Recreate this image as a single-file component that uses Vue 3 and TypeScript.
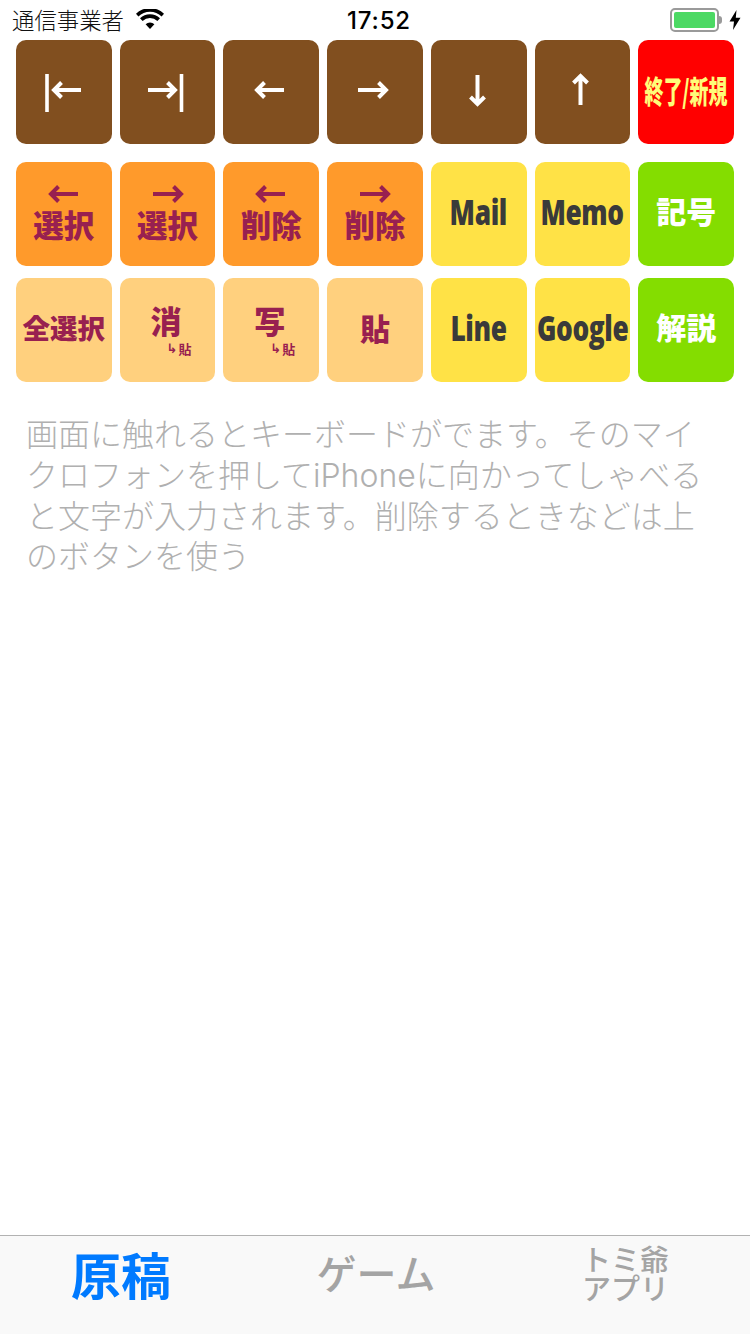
<script setup lang="ts">
type Arrow = 'left' | 'right' | 'up' | 'down' | 'barLeft' | 'barRight'
interface Key {
  tone: string
  text?: string
  arrow?: Arrow
  sub?: boolean
  large?: boolean
}
const rowOne: Key[] = [
  { tone: 'brown', arrow: 'barLeft' },
  { tone: 'brown', arrow: 'barRight' },
  { tone: 'brown', arrow: 'left' },
  { tone: 'brown', arrow: 'right' },
  { tone: 'brown', arrow: 'down' },
  { tone: 'brown', arrow: 'up' },
  { tone: 'red', text: '終了/新規' },
]
const rowTwo: Key[] = [
  { tone: 'orange', arrow: 'left', text: '選択' },
  { tone: 'orange', arrow: 'right', text: '選択' },
  { tone: 'orange', arrow: 'left', text: '削除' },
  { tone: 'orange', arrow: 'right', text: '削除' },
  { tone: 'yellow', text: 'Mail' },
  { tone: 'yellow', text: 'Memo' },
  { tone: 'green', text: '記号' },
]
const rowThree: Key[] = [
  { tone: 'peach', text: '全選択' },
  { tone: 'peach', text: '消', sub: true },
  { tone: 'peach', text: '写', sub: true },
  { tone: 'peach', text: '貼', large: true },
  { tone: 'yellow', text: 'Line' },
  { tone: 'yellow', text: 'Google' },
  { tone: 'green', text: '解説' },
]
const rows = [rowOne, rowTwo, rowThree]
const hint = [
  '画面に触れるとキーボードがでます。そのマイ',
  'クロフォンを押してiPhoneに向かってしゃべる',
  'と文字が入力されます。削除するときなどは上',
  'のボタンを使う',
]
</script>

<template>
  <div class="page">
    <header class="status">
      <div class="status-left">
        <span class="carrier">通信事業者</span>
        <svg class="wifi" viewBox="0 0 28 20" width="28" height="20">
          <path d="M14 20 L9.6 15.2 A6.6 6.6 0 0 1 18.4 15.2 Z" fill="#000" />
          <path d="M6.6 12 L4 9.2 A14.5 14.5 0 0 1 24 9.2 L21.4 12 A10.8 10.8 0 0 0 6.6 12 Z" fill="#000" />
          <path d="M2.4 7.4 L0 4.8 A20 20 0 0 1 28 4.8 L25.6 7.4 A16.6 16.6 0 0 0 2.4 7.4 Z" fill="#000" />
        </svg>
      </div>
      <span class="clock">17:52</span>
      <div class="status-right">
        <div class="battery"><div class="charge"></div></div>
        <div class="nub"></div>
        <svg class="bolt" viewBox="0 0 12 20" width="12" height="20">
          <path d="M7.5 0 L0.5 11.5 H5 L4 20 L11.5 7.8 H6.8 Z" fill="#000" />
        </svg>
      </div>
    </header>

    <main class="main">
      <div class="keys">
        <div v-for="(row, r) in rows" :key="r" class="key-row">
          <button v-for="(k, i) in row" :key="i" class="key" :class="[k.tone, { 'key-large': k.large, 'key-sub': k.sub }]">
            <svg v-if="k.arrow" class="arrow" :class="'arrow-' + k.arrow" viewBox="0 0 48 48" width="48" height="48">
              <template v-if="k.arrow === 'barLeft'">
                <path d="M7 6 V44" stroke-width="3.6" />
                <path d="M41 22 H14 M21.5 14.5 L14 22 L21.5 29.5" stroke-width="4" />
              </template>
              <template v-else-if="k.arrow === 'barRight'">
                <path d="M37.5 6 V44" stroke-width="3.6" />
                <path d="M4 22 H31 M23.5 14.5 L31 22 L23.5 29.5" stroke-width="4" />
              </template>
              <path v-else-if="k.arrow === 'left'" d="M37 22 H10 M17.5 14.5 L10 22 L17.5 29.5" stroke-width="4" />
              <path v-else-if="k.arrow === 'right'" d="M7 22 H35 M27.5 14.5 L35 22 L27.5 29.5" stroke-width="4" />
              <path v-else-if="k.arrow === 'down'" d="M22.5 7 V36 M15.5 29 L22.5 36 L29.5 29" stroke-width="4" />
              <path v-else d="M22.5 37 V8 M15.5 15 L22.5 8 L29.5 15" stroke-width="4" />
            </svg>
            <span v-if="k.text" class="label">{{ k.text }}</span>
            <span v-if="k.sub" class="sub"><span class="sub-hook">↳</span>貼</span>
          </button>
        </div>
      </div>
      <div class="hint">
        <p v-for="line in hint" :key="line">{{ line }}</p>
      </div>
    </main>

    <footer class="tabs">
      <div class="tab tab-on">原稿</div>
      <div class="tab tab-game">ゲーム</div>
      <div class="tab tab-apps">
        <span>トミ爺</span>
        <span>アプリ</span>
      </div>
    </footer>
  </div>
</template>

<style scoped>
.page {
  width: 750px;
  height: 1334px;
  display: flex;
  flex-direction: column;
  background: #fff;
  font-family: "Noto Sans CJK JP", "Noto Sans", sans-serif;
  overflow: hidden;
}
.status {
  height: 40px;
  flex: none;
  display: grid;
  grid-template-columns: 1fr auto 1fr;
  align-items: center;
  padding: 0 9px 0 12px;
  color: #000;
}
.status-left {
  display: flex;
  align-items: center;
  gap: 14px;
}
.carrier {
  font-size: 22.4px;
  line-height: 38px;
  padding-bottom: 2px;
  color: #111;
  font-weight: 300;
}
.wifi {
  margin-bottom: 2px;
  margin-left: -2px;
}
.clock {
  font-family: Inter, "Liberation Sans", sans-serif;
  font-size: 24px;
  font-weight: 500;
  letter-spacing: 0.8px;
  margin-left: 5px;
}
.status-right {
  display: flex;
  align-items: center;
  justify-content: flex-end;
}
.battery {
  width: 49px;
  height: 24px;
  box-sizing: border-box;
  border: 2px solid #9a9a9a;
  border-radius: 5px;
  padding: 2px;
  background: #fff;
}
.charge {
  width: 100%;
  height: 100%;
  background: #4cd964;
  border-radius: 2px;
}
.nub {
  width: 3px;
  height: 8px;
  background: #9a9a9a;
  border-radius: 0 3px 3px 0;
  margin-right: 7px;
}
.main {
  flex: 1;
  min-height: 0;
}
.keys {
  padding: 0 16px;
  display: flex;
  flex-direction: column;
}
.key-row {
  display: grid;
  grid-template-columns: repeat(7, 1fr);
  column-gap: 8px;
  margin-bottom: 12px;
}
.key-row:first-child {
  margin-bottom: 18px;
}
.key {
  position: relative;
  height: 104px;
  border: 0;
  padding: 0;
  border-radius: 10px;
  display: flex;
  flex-direction: column;
  align-items: center;
  justify-content: center;
  overflow: hidden;
  font-family: inherit;
  font-weight: 900;
}
.arrow path {
  fill: none;
  stroke: currentColor;
  stroke-linecap: butt;
  stroke-linejoin: miter;
}
.label {
  display: block;
  white-space: nowrap;
  line-height: 1;
}
.brown {
  background: #814f1f;
  color: #fff;
}
.red {
  background: #ff0000;
  color: #fffc79;
}
.red .label {
  font-size: 31px;
  transform: translateY(-3px) scaleX(0.61);
}
.orange {
  background: #ff9a2b;
  color: #982050;
}
.orange .arrow {
  margin-top: -16.7px;
  margin-bottom: -10.3px;
}
.orange .arrow-right {
  transform: translateX(2px);
}
.orange .arrow-left {
  transform: translateX(1px);
}
.orange .label {
  font-size: 30.5px;
}
.peach {
  background: #ffd07e;
  color: #982050;
}
.peach .label {
  font-size: 27.5px;
  transform: translateY(-2px);
}
.peach.key-large .label {
  font-size: 30px;
  transform: translateY(-3px);
}
.peach.key-sub .label {
  font-size: 31px;
  margin: -22px 3px 0 0;
  transform: none;
}
.sub {
  position: absolute;
  right: 24px;
  bottom: 27px;
  font-size: 13px;
  font-weight: 700;
  line-height: 1;
  display: flex;
  align-items: center;
}
.sub-hook {
  font-size: 13px;
  font-family: "DejaVu Sans", sans-serif;
  margin-right: 1px;
}
.yellow {
  background: #ffe246;
  color: #3a3a3a;
}
.yellow .label {
  font-family: "Open Sans", "Noto Sans", sans-serif;
  font-size: 36px;
  font-weight: 800;
  transform: translateY(-2px) scaleX(0.73);
  letter-spacing: -0.5px;
}
.green {
  background: #84dd00;
  color: #fff;
}
.green .label {
  font-size: 30px;
  transform: translateY(-4px);
}
.hint {
  margin-top: 21px;
  padding-left: 26px;
  color: #b0b0b0;
  font-family: Inter, "Noto Sans CJK JP", sans-serif;
  font-size: 32px;
  font-weight: 300;
  line-height: 40.8px;
}
.hint p {
  margin: 0;
  white-space: nowrap;
}
.tabs {
  height: 99px;
  flex: none;
  box-sizing: border-box;
  border-top: 1px solid #b2b2b2;
  background: #f9f9f9;
  display: grid;
  grid-template-columns: 242px 268px 1fr;
  color: #a4a4a4;
  font-weight: 700;
}
.tab {
  display: flex;
  flex-direction: column;
  align-items: center;
  white-space: nowrap;
}
.tab-on {
  color: #007aff;
  font-size: 50px;
  line-height: 74px;
}
.tab-game {
  font-size: 40px;
  font-weight: 500;
  line-height: 72px;
}
.tab-apps {
  font-size: 29px;
  font-weight: 500;
  line-height: 29px;
  padding-top: 8px;
  padding-right: 9px;
}
</style>
